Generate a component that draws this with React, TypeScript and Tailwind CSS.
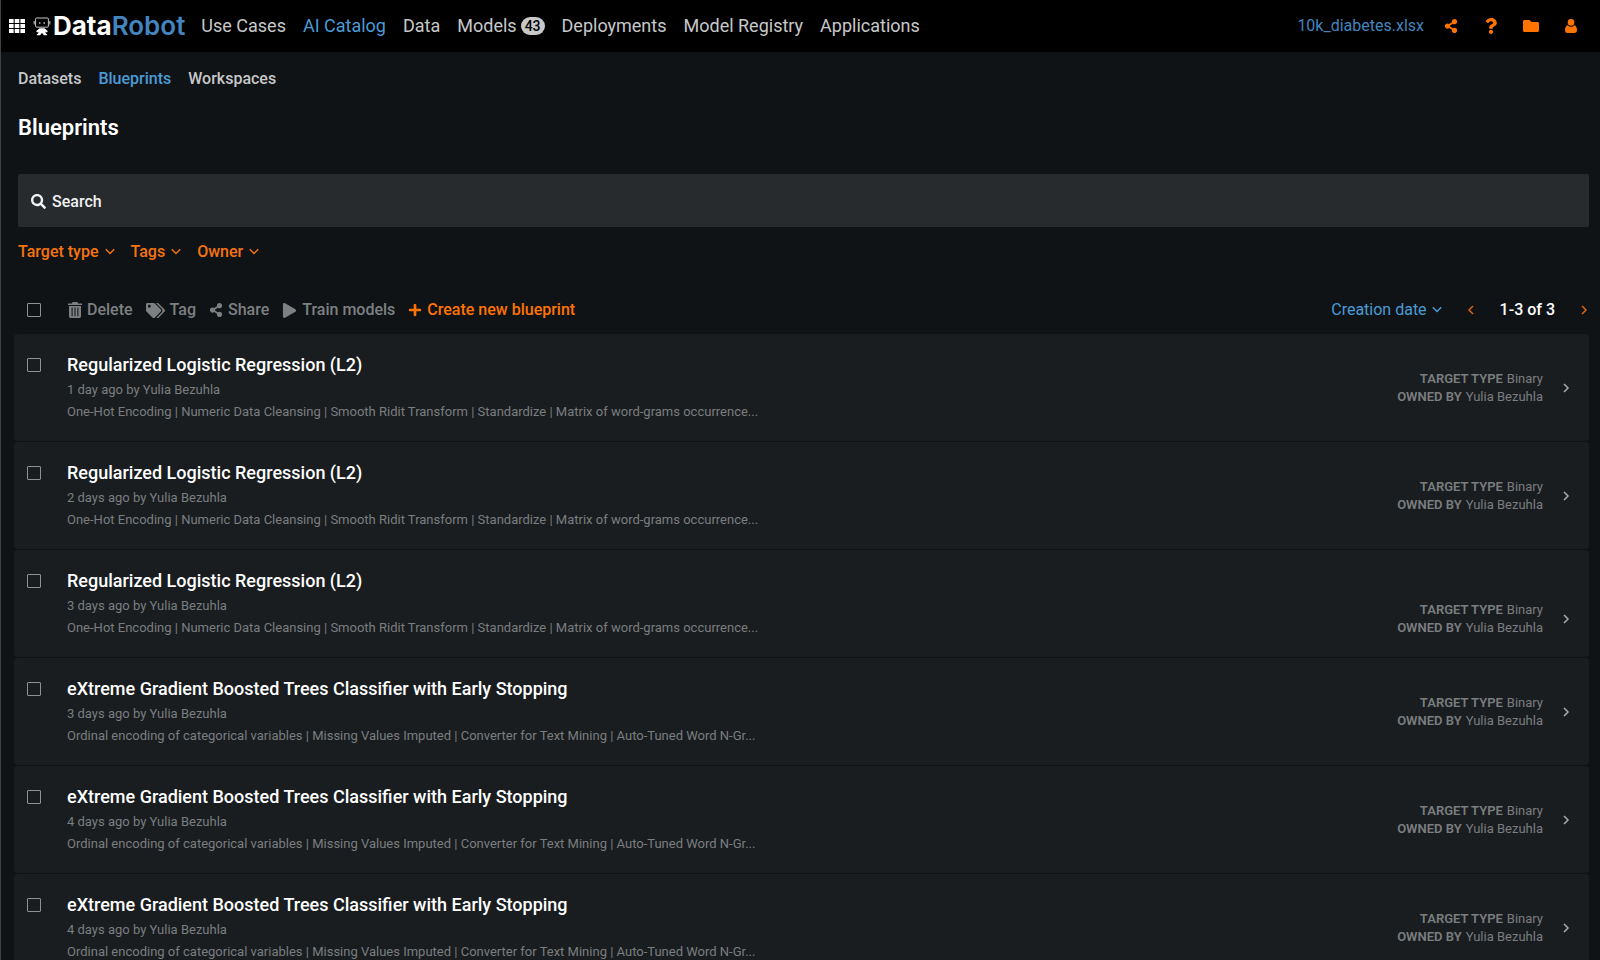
import type { ReactNode } from "react";
import {
  FaFolder,
  FaPlay,
  FaPlus,
  FaQuestion,
  FaSearch,
  FaShareAlt,
  FaTags,
} from "react-icons/fa";

type Blueprint = {
  title: string;
  age: string;
  steps: string;
  lowered?: boolean;
};

const LOGISTIC = "Regularized Logistic Regression (L2)";
const LOGISTIC_STEPS =
  "One-Hot Encoding | Numeric Data Cleansing | Smooth Ridit Transform | Standardize | Matrix of word-grams occurrence...";
const TREES = "eXtreme Gradient Boosted Trees Classifier with Early Stopping";
const TREES_STEPS =
  "Ordinal encoding of categorical variables | Missing Values Imputed | Converter for Text Mining | Auto-Tuned Word N-Gr...";

const blueprints: Blueprint[] = [
  { title: LOGISTIC, age: "1 day ago", steps: LOGISTIC_STEPS },
  { title: LOGISTIC, age: "2 days ago", steps: LOGISTIC_STEPS },
  { title: LOGISTIC, age: "3 days ago", steps: LOGISTIC_STEPS, lowered: true },
  { title: TREES, age: "3 days ago", steps: TREES_STEPS },
  { title: TREES, age: "4 days ago", steps: TREES_STEPS },
  { title: TREES, age: "4 days ago", steps: TREES_STEPS },
];

function Chevron({ className, d }: { className: string; d: string }) {
  return (
    <svg viewBox="0 0 10 10" className={className} fill="none" stroke="currentColor" strokeWidth="1.5" aria-hidden="true">
      <path d={d} />
    </svg>
  );
}

const DOWN = "M0.8 2.3 5 6.5 9.2 2.3";
const LEFT = "M7 1 3 5 7 9";
const RIGHT = "M3 1 7 5 3 9";

function GridIcon() {
  return (
    <svg viewBox="0 0 16 14" className="h-3.5 w-4" fill="currentColor" aria-hidden="true">
      {[0, 5, 10].map((y) =>
        [0, 5.7, 11.4].map((x) => <rect key={`${x}-${y}`} x={x} y={y} width="4.6" height="4" />),
      )}
    </svg>
  );
}

function RobotIcon() {
  return (
    <svg viewBox="0 0 18 19" className="h-[19px] w-[18px]" aria-hidden="true">
      <path d="M3.6 1h10.8q1 0 1 1v7q0 1.2-1.2 1.2H3.8Q2.6 10.2 2.6 9V2q0-1 1-1z" fill="none" stroke="#c4c4c4" strokeWidth="1" />
      <path d="M1.2 4v3.4M16.8 4v3.4" stroke="#c4c4c4" strokeWidth="1.1" />
      <circle cx="6.8" cy="6" r="0.8" fill="#fff" />
      <circle cx="11.2" cy="6" r="0.8" fill="#fff" />
      <path d="M6.6 11.2h4.8l3.4 2.9-.8 1.4-1.6-.7.5 1.8 1.3.7v1h-3.6l-.6-1.7H8l-.6 1.7H3.8v-1l1.3-.7.5-1.8-1.6.7-.8-1.4z" fill="#fff" />
    </svg>
  );
}

function TrashIcon() {
  return (
    <svg viewBox="0 0 14 16" className="h-4 w-3.5" fill="currentColor" aria-hidden="true">
      <path d="M4.6 0h4.8l.7 1.4H14V3H0V1.4h3.9z" />
      <path
        fillRule="evenodd"
        d="M1 4h12v10.6q0 1.4-1.4 1.4H2.4Q1 16 1 14.6zM3.6 5.6v8.6h1V5.6zm2.9 0v8.6h1V5.6zm2.9 0v8.6h1V5.6z"
      />
    </svg>
  );
}

function UserIcon() {
  return (
    <svg viewBox="0 0 12 14" className="h-3.5 w-3" fill="currentColor" aria-hidden="true">
      <circle cx="6" cy="3.4" r="3.3" />
      <path d="M2.6 6.2A4.6 4.6 0 0 0 9.4 6.2Q12 6.8 12 11.6 12 14 9.8 14H2.2Q0 14 0 11.6 0 6.8 2.6 6.2z" />
    </svg>
  );
}

function NavLink({ active, children }: { active?: boolean; children: ReactNode }) {
  return (
    <a href="#" className={active ? "flex items-center gap-1 text-[#4a9bd6]" : "flex items-center gap-1"}>
      {children}
    </a>
  );
}

function Filter({ label }: { label: string }) {
  return (
    <button type="button" className="flex items-center gap-1.5">
      {label}
      <Chevron className="size-2.5" d={DOWN} />
    </button>
  );
}

function Tool({ icon, children }: { icon: ReactNode; children: ReactNode }) {
  return (
    <button type="button" className="flex items-center gap-[5px]">
      {icon}
      {children}
    </button>
  );
}

function Tick({ label }: { label: string }) {
  return (
    <input
      type="checkbox"
      aria-label={label}
      className="size-3.5 shrink-0 appearance-none rounded-[1px] border border-[#8f9294] checked:bg-[#8f9294]"
    />
  );
}

function Row({ item }: { item: Blueprint }) {
  return (
    <li className="flex min-h-[107px] rounded-sm bg-[#191d1f] pr-[18px] pl-[13px]">
      <div className="flex pt-6">
        <Tick label={`Select ${item.title}, ${item.age}`} />
      </div>
      <div className="min-w-0 grow pt-[19px] pl-[26px] text-[#7b7e80]">
        <h2 className="text-lg leading-6 font-medium text-white">{item.title}</h2>
        <p className="mt-0.5 text-[13px] leading-[22px]">{item.age} by Yulia Bezuhla</p>
        <p className="text-[13px] leading-[22px]">{item.steps}</p>
      </div>
      <div className={item.lowered ? "flex items-center gap-[18px] pt-[30px]" : "flex items-center gap-[18px]"}>
        <dl className="text-right text-[13px] leading-[18px] text-[#7b7e80]">
          <div className="flex justify-end gap-1">
            <dt className="font-semibold">TARGET TYPE</dt>
            <dd>Binary</dd>
          </div>
          <div className="flex justify-end gap-1">
            <dt className="font-semibold">OWNED BY</dt>
            <dd>Yulia Bezuhla</dd>
          </div>
        </dl>
        <button type="button" aria-label={`Open ${item.title}`} className="text-[#a9acae]">
          <Chevron className="size-2.5" d={RIGHT} />
        </button>
      </div>
    </li>
  );
}

export default function App() {
  return (
    <div className="h-screen overflow-hidden border-l border-[#3d4042] bg-[#101316] font-['Roboto',sans-serif] text-[#c6c8c9]">
      <header className="flex h-[52px] items-center bg-black pr-[9px] pl-2">
        <button type="button" aria-label="Applications menu" className="text-white">
          <GridIcon />
        </button>
        <a href="#" className="ml-2 flex items-center gap-0.5">
          <RobotIcon />
          <span className="font-['Inter',sans-serif] text-[26px] leading-8 font-bold text-white">
            Data<span className="font-semibold text-[#4385bf]">Robot</span>
          </span>
        </a>
        <nav className="ml-4 flex items-center gap-[17px] text-lg leading-6">
          <NavLink>Use Cases</NavLink>
          <NavLink active>AI Catalog</NavLink>
          <NavLink>Data</NavLink>
          <NavLink>
            Models
            <span className="rounded-full bg-[#c6c8c9] px-1 text-sm leading-[18px] font-medium text-black">43</span>
          </NavLink>
          <NavLink>Deployments</NavLink>
          <NavLink>Model Registry</NavLink>
          <NavLink>Applications</NavLink>
        </nav>
        <div className="ml-auto flex items-center text-[#ff7300]">
          <a href="#" className="mr-[7px] text-base text-[#4385bf]">10k_diabetes.xlsx</a>
          <button type="button" aria-label="Share" className="flex w-10 justify-center">
            <FaShareAlt className="size-3.5" />
          </button>
          <button type="button" aria-label="Help" className="flex w-10 justify-center">
            <FaQuestion className="size-4" />
          </button>
          <button type="button" aria-label="Files" className="flex w-10 justify-center">
            <FaFolder className="size-4" />
          </button>
          <button type="button" aria-label="Account" className="flex w-10 justify-center">
            <UserIcon />
          </button>
        </div>
      </header>

      <main className="pr-[11px] pl-[17px]">
        <nav className="flex gap-[17px] pt-[15px] text-base leading-6 font-medium">
          <a href="#">Datasets</a>
          <a href="#" className="text-[#4a9bd6]">Blueprints</a>
          <a href="#">Workspaces</a>
        </nav>

        <h1 className="mt-[23px] text-[22px] leading-7 font-semibold text-white">Blueprints</h1>

        <label className="mt-8 flex h-[53px] items-center gap-1.5 rounded-xs bg-[#272b2e] px-[13px] pt-0.5 text-[#f0f1f1]">
          <FaSearch className="size-[15px]" />
          <input
            type="search"
            aria-label="Search"
            placeholder="Search"
            className="grow bg-transparent text-base font-medium outline-none placeholder:text-[#f0f1f1]"
          />
        </label>

        <div className="mt-[13px] flex gap-4 text-base leading-6 font-medium text-[#f5740f]">
          <Filter label="Target type" />
          <Filter label="Tags" />
          <Filter label="Owner" />
        </div>

        <div className="mt-[34px] flex items-center text-base leading-6 font-medium">
          <div className="flex pr-[27px] pl-[9px]">
            <Tick label="Select all blueprints" />
          </div>
          <div className="flex items-center gap-[13px] text-[#7d8082]">
            <Tool icon={<TrashIcon />}>Delete</Tool>
            <Tool icon={<FaTags className="size-[19px]" />}>Tag</Tool>
            <Tool icon={<FaShareAlt className="size-3.5" />}>Share</Tool>
            <Tool icon={<FaPlay className="size-[15px]" />}>Train models</Tool>
            <span className="flex text-[#ff7300]">
              <Tool icon={<FaPlus className="size-3.5" />}>Create new blueprint</Tool>
            </span>
          </div>
          <div className="ml-auto flex items-center">
            <button type="button" className="flex items-center gap-[5px] font-normal text-[#4a9bd6]">
              Creation date
              <Chevron className="size-2.5" d={DOWN} />
            </button>
            <button type="button" aria-label="Previous page" className="ml-6 text-[#d9650c]">
              <Chevron className="size-2.5" d={LEFT} />
            </button>
            <span className="mx-6 text-white">1-3 of 3</span>
            <button type="button" aria-label="Next page" className="text-[#d9650c]">
              <Chevron className="size-2.5" d={RIGHT} />
            </button>
          </div>
        </div>

        <ul className="mt-3 -ml-1 flex flex-col gap-px">
          {blueprints.map((item, i) => (
            <Row key={i} item={item} />
          ))}
        </ul>
      </main>
    </div>
  );
}
